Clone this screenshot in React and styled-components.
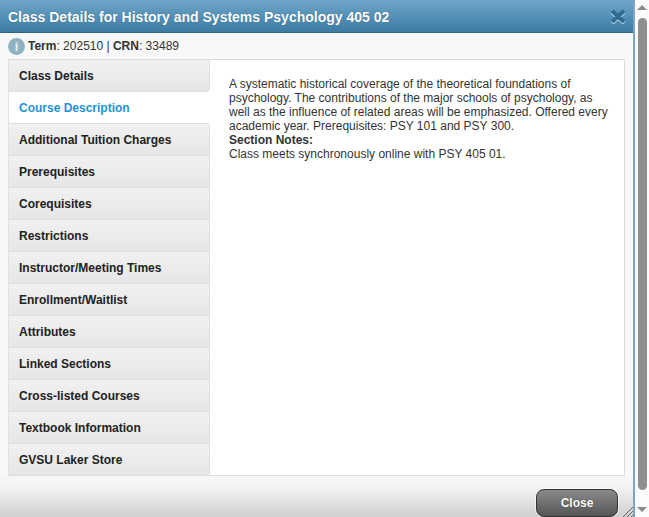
import React from "react";
import styled, { createGlobalStyle } from "styled-components";

const GlobalStyle = createGlobalStyle`
  html, body {
    margin: 0;
    padding: 0;
    height: 517px;
    overflow: hidden;
    background: #fff;
    font-family: "Liberation Sans", Arial, sans-serif;
  }
`;

const Page = styled.div`
  display: flex;
  width: 649px;
  height: 517px;
`;

const Dialog = styled.div`
  width: 635px;
  height: 517px;
  box-sizing: border-box;
  flex: none;
  border-right: 2px solid #7fa6c4;
  display: flex;
  flex-direction: column;
  background: #f8f8f8;
  position: relative;
`;

const TitleBar = styled.div`
  height: 33px;
  flex: none;
  box-sizing: border-box;
  display: flex;
  align-items: center;
  justify-content: space-between;
  padding: 1px 6px 0 8px;
  background: linear-gradient(#6fa6c9, #3c7ba3);
  border-bottom: 1px solid #2d6487;
`;

const TitleText = styled.div`
  color: #fff;
  font-size: 14px;
  font-weight: bold;
  text-shadow: 0 0 1px rgba(20, 60, 90, 0.6);
`;

const InfoRow = styled.div`
  height: 26px;
  flex: none;
  display: flex;
  align-items: center;
  gap: 3px;
  padding-left: 8px;
  font-size: 12px;
  color: #333;
`;

const InfoBadge = styled.span`
  width: 17px;
  height: 17px;
  border-radius: 50%;
  background: #8fb3c2;
  color: #e8f2f6;
  font-size: 13px;
  font-weight: bold;
  display: flex;
  align-items: center;
  justify-content: center;
`;

const Strong = styled.b`
  font-weight: bold;
`;

const Body = styled.div`
  margin-left: 8px;
  width: 617px;
  height: 417px;
  flex: none;
  box-sizing: border-box;
  display: flex;
  background: #fff;
  border: 1px solid #dcdcdc;
  border-left: none;
`;

const Tabs = styled.div`
  width: 202px;
  flex: none;
  display: flex;
  flex-direction: column;
`;

const Tab = styled.div`
  height: 32px;
  flex: none;
  box-sizing: border-box;
  display: flex;
  align-items: center;
  padding: 1px 0 0 10px;
  font-size: 12px;
  font-weight: bold;
  color: ${(p) => (p.$active ? "#1a94d6" : "#222")};
  background: ${(p) => (p.$active ? "#fff" : "linear-gradient(#f1f1f1, #e6e6e6)")};
  border-left: 1px solid #e0e0e0;
  border-right: 1px solid ${(p) => (p.$active ? "#fff" : "#e0e0e0")};
  border-bottom: 1px solid #dedede;
  border-bottom-right-radius: ${(p) => (p.$beforeActive ? "4px" : "0")};
  border-top-right-radius: ${(p) => (p.$afterActive ? "4px" : "0")};
`;

const Description = styled.div`
  flex: 1;
  padding: 17px 12px 0 19px;
  font-size: 12px;
  line-height: 14px;
  color: #333;
`;

const Footer = styled.div`
  flex: 1;
  display: flex;
  justify-content: flex-end;
  align-items: flex-end;
  padding: 0 15px 0 0;
  background: linear-gradient(#f6f6f6, #f4f4f4 25%, #cfcfcf);
`;

const CloseButton = styled.button`
  width: 82px;
  height: 28px;
  box-sizing: border-box;
  padding: 0 0 1px;
  border: 1px solid #333;
  border-radius: 8px;
  background: linear-gradient(#8a8a8a, #555);
  box-shadow: 0 0 0 1px rgba(255, 255, 255, 0.6);
  color: #fff;
  font-family: inherit;
  font-size: 12px;
  font-weight: bold;
  text-shadow: 0 0 1px rgba(0, 0, 0, 0.6);
`;

const Grip = styled.svg`
  position: absolute;
  right: 0;
  bottom: 0;
`;

const Scrollbar = styled.div`
  width: 14px;
  flex: none;
  display: flex;
  flex-direction: column;
  align-items: center;
  background: #fbfbfb;
`;

const Arrow = styled.div`
  width: 0;
  height: 0;
  margin: 5px 0;
  border-left: 5px solid transparent;
  border-right: 5px solid transparent;
  ${(p) => (p.$down ? "border-top: 5px solid #8a8a8a;" : "border-bottom: 5px solid #8a8a8a;")}
`;

const Thumb = styled.div`
  flex: 1;
  width: 9px;
  margin: 3px 0 12px;
  border-radius: 5px;
  background: #8f8f8f;
`;

const tabs = [
  "Class Details",
  "Course Description",
  "Additional Tuition Charges",
  "Prerequisites",
  "Corequisites",
  "Restrictions",
  "Instructor/Meeting Times",
  "Enrollment/Waitlist",
  "Attributes",
  "Linked Sections",
  "Cross-listed Courses",
  "Textbook Information",
  "GVSU Laker Store",
];

const App = () => {
  const activeIndex = 1;
  return (
    <Page>
      <GlobalStyle />
      <Dialog>
        <TitleBar>
          <TitleText>Class Details for History and Systems Psychology 405 02</TitleText>
          <svg width="18" height="17" viewBox="0 0 18 17">
            <path d="M3 14 L15 3 M3 3 L15 14" stroke="#d5e8f3" strokeWidth="4" transform="translate(0 1)" />
            <path d="M3 14 L15 3 M3 3 L15 14" stroke="#2f6a90" strokeWidth="4" />
          </svg>
        </TitleBar>
        <InfoRow>
          <InfoBadge>i</InfoBadge>
          <span>
            <Strong>Term</Strong>: 202510 | <Strong>CRN</Strong>: 33489
          </span>
        </InfoRow>
        <Body>
          <Tabs>
            {tabs.map((t, i) => (
              <Tab
                key={t}
                $active={i === activeIndex}
                $beforeActive={i === activeIndex - 1}
                $afterActive={i === activeIndex + 1}
              >
                {t}
              </Tab>
            ))}
          </Tabs>
          <Description>
            A systematic historical coverage of the theoretical foundations of psychology. The
            contributions of the major schools of psychology, as well as the influence of related
            areas will be emphasized. Offered every academic year. Prerequisites: PSY 101 and PSY
            300.
            <br />
            <Strong>Section Notes:</Strong>
            <br />
            Class meets synchronously online with PSY 405 01.
          </Description>
        </Body>
        <Footer>
          <CloseButton>Close</CloseButton>
        </Footer>
        <Grip width="12" height="12" viewBox="0 0 12 12">
          <path d="M2 12 L12 2 M6 12 L12 6 M10 12 L12 10" stroke="#666" strokeWidth="1" />
        </Grip>
      </Dialog>
      <Scrollbar>
        <Arrow />
        <Thumb />
        <Arrow $down />
      </Scrollbar>
    </Page>
  );
};

export default App;
